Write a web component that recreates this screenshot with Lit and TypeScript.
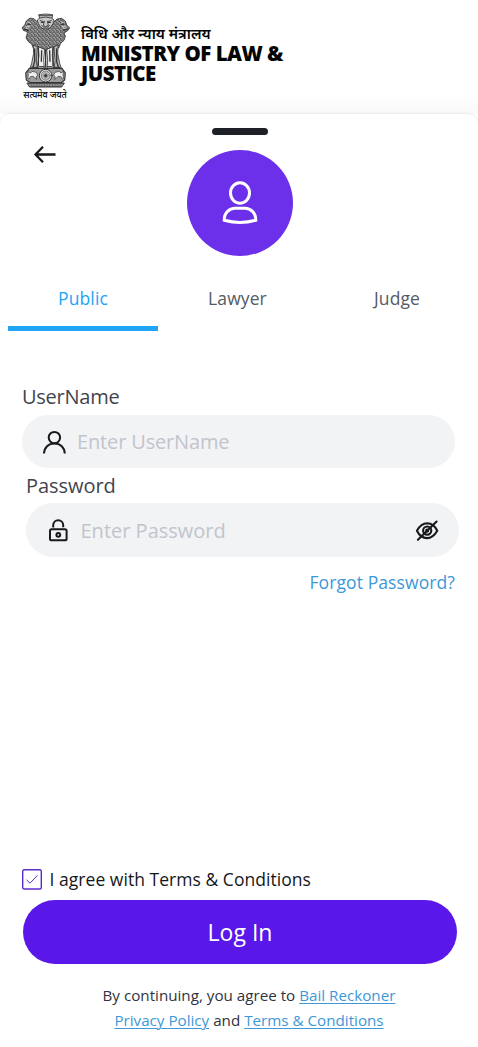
import { LitElement, html, css, svg } from "lit";
import { customElement, state } from "lit/decorators.js";

@customElement("state-emblem")
class StateEmblem extends LitElement {
  static styles = css`
    :host { display: block; width: 50px; height: 76px; }
    svg { display: block; }
  `;
  render() {
    const spokes = Array.from({ length: 8 }, (_, i) => svg`<path d="M92 199V225" transform=${`rotate(${i * 22.5} 92 212)`} stroke-width="1"/>`);
    return html`<svg width="50" height="76" viewBox="18 24 150 228" fill="none" stroke="#333" stroke-width="2.500" stroke-linejoin="round" stroke-linecap="round">
      <defs>
        <pattern id="fur" width="11" height="12" patternUnits="userSpaceOnUse">
          <rect width="11" height="12" fill="#8c8c8c" stroke="none"/>
          <path d="M1 1q5 1 3 6M7 4q4 3 1 7M2 9q2 1 2 3" stroke="#2c2c2c" stroke-width="2.200"/>
          <path d="M5 1q3 1 3 3M1 6l1 3" stroke="#d8d8d8" stroke-width="1.800"/>
        </pattern>
      </defs>
      <path d="M44 40L34 48 29 61 21 68 26 77 36 79 37 86 33 98 40 110 50 117 55 129 75 130 92 135 110 130 131 129 137 115 147 106 151 94 147 84 157 78 164 69 155 60 151 48 140 40 126 42 116 52 68 52 58 42Z" fill="url(#fur)"/>
      <path d="M72 29Q92 25 113 29L111 40 117 45 114 56 106 68 92 76 78 68 70 56 67 45 73 40Z" fill="#c8c8c8"/>
      <path d="M73 32H111M74 39Q92 33 110 39M76 47l9 2M100 49l9-2M88 49l-3 12 7 4 8-4-3-12M80 62q12 10 24 0M84 69q8 5 16 0"/>
      <path d="M79 52h6M100 52h6" stroke-width="4"/>
      <path d="M37 54l7-2 4 6-6 6-10 2M28 70l11 1 4-6M148 54l-7-2-4 6 6 6 10 2M157 70l-11 1-4-6" stroke="#d8d8d8"/>
      <path d="M39 57l7 2M145 57l-7 2M28 72l12 4M157 72l-12 4" stroke-width="4"/>
      <path d="M55 121Q59 145 50 175L45 190H67L64 168 67 126ZM129 121Q125 145 134 175L139 190H117L120 168 117 126Z" fill="#b9b9b9"/>
      <path d="M70 126L72 151 67 190H88L86 165 89 134ZM114 126L112 151 117 190H96L98 165 95 134Z" fill="#ededed"/>
      <path d="M59 132v38l-5 16M70 130v52M80 137l-1 32M125 132v38l5 16M114 130v52M104 137l1 32M92 136v50" stroke-width="4"/>
      <path d="M50 187h20M73 185h14M97 185h14M114 187h20" stroke-width="3"/>
      <path d="M43 190H141L151 204 149 225 138 233H46L34 225 32 204Z" fill="#9c9c9c" stroke-width="3.500"/>
      <path d="M39 200l8 4 4-5 13 3 4 8-5 6 3 7-6-3-5-6-9 1-3 7-5-2 2-9zM145 200l-8 4-4-5-13 3-4 8 5 6-3 7 6-3 5-6 9 1 3 7 5-2-2-9z" fill="#f0f0f0" stroke-width="2"/>
      <circle cx="92" cy="212" r="19" fill="#f2f2f2" stroke-width="3"/>
      <circle cx="92" cy="212" r="14" stroke-width="1.500" fill="#d9d9d9"/>
      ${spokes}
      <circle cx="92" cy="212" r="3" fill="#333"/>
      <path d="M37 234H148L140 246H45Z" fill="#6b6b6b" stroke-width="3"/>
      <path d="M43 240H142" stroke-dasharray="3 5" stroke="#c4c4c4"/>
    </svg>`;
  }
}

const userIcon = html`<svg width="24" height="24" viewBox="0 0 24 24" fill="none" stroke="#17191c" stroke-width="2"><circle cx="12.400" cy="7.600" r="5.700"/><path d="M2 23.500C2.200 17.300 6.500 13.500 12.400 13.500s10.200 3.800 10.400 10"/></svg>`;
const lockIcon = html`<svg width="20" height="24" viewBox="0 0 20 24" fill="none" stroke="#17191c" stroke-width="2"><rect x="2" y="11.300" width="16.600" height="11" rx="1.600"/><path d="M5.200 9.500V7.200a5 5 0 0 1 10 0V9.300"/><circle cx="10.300" cy="16.800" r="1.900"/></svg>`;
const eyeIcon = html`<svg width="24" height="24" viewBox="0 0 24 24" fill="none" stroke="#17191c" stroke-width="2.100" stroke-linecap="round" stroke-linejoin="round"><path d="M1.900 12.700Q6 5.400 12.300 5.300 18.500 5.400 22.300 12.700 18 20 12 20.100 5.500 20 1.900 12.700Z"/><circle cx="12.200" cy="12.600" r="4.100"/><circle cx="12.200" cy="12.600" r="1"/><path d="M2.900 21.800L21.600 3.500"/></svg>`;

@customElement("app-root")
class AppRoot extends LitElement {
  @state() tab = 0;
  @state() agreed = true;

  static styles = css`
    :host {
      display: flex; flex-direction: column; box-sizing: border-box; width: 478px; height: 1047px;
      overflow: hidden; background: #fff; color: #42444e;
      font-family: "Open Sans", "Noto Sans", sans-serif; white-space: nowrap;
    }
    svg { display: block; flex: none; }
    .header {
      box-sizing: border-box; flex: none; display: flex; height: 114px; padding: 12.500px 0 0 21px;
      background: linear-gradient(#fff 80%, #f9f9f9);
      color: #050505; font-family: "Noto Sans", sans-serif;
    }
    .emblem { width: 50px; display: flex; flex-direction: column; align-items: center; }
    .motto { font-size: 9px; line-height: 13px; font-weight: 500; letter-spacing: -.15px; margin: -1px 2px 0 0; }
    .ministry { padding: 11px 0 0 10px; }
    .hindi { font-size: 14.800px; line-height: 19px; font-weight: 600; }
    .english { font-family: "Open Sans", sans-serif; font-size: 20.500px; line-height: 20px; font-weight: 800; letter-spacing: -.5px; }
    .sheet {
      box-sizing: border-box; flex: 1; display: flex; flex-direction: column;
      background: #fff; border-radius: 10px 10px 0 0; box-shadow: 0 0 3px rgba(0, 0, 0, .12);
    }
    .top { flex: none; display: grid; grid-template-columns: 187px 106px 1fr; height: 152px; }
    .back { padding: 31px 0 0 33px; }
    .middle { display: flex; flex-direction: column; align-items: center; padding-top: 14px; }
    .handle { width: 56px; height: 6.700px; border-radius: 3.500px; background: #1d2026; }
    .avatar { display: grid; place-items: center; width: 106px; height: 106px; margin-top: 15px; border-radius: 50%; background: #6c30eb; }
    .tabs { flex: none; display: grid; grid-template-columns: 150px 159px 160px; padding-left: 8px; height: 65px; }
    .tab { box-sizing: border-box; text-align: center; font-size: 17.500px; letter-spacing: .1px; line-height: 24px; padding-top: 20px; color: #565a66; border-bottom: 5px solid transparent; }
    .tab.on { color: #20a5f6; border-color: #20a5f6; }
    .form { flex: none; padding: 54px 0 0 22px; }
    .label { font-size: 20px; line-height: 24px; letter-spacing: -.25px; }
    .field { display: flex; align-items: center; box-sizing: border-box; width: 432.500px; height: 53px; border-radius: 27px; background: #f2f3f5; margin-top: 6px; padding: 0 20px 0 20px; color: #c2c4cc; font-size: 20px; letter-spacing: -.15px; }
    .hint { flex: 1; padding-left: 11px; }
    .second { padding: 6px 0 0 4px; }
    .second .label { letter-spacing: -.05px; }
    .second .field { padding-left: 22px; height: 54px; margin-top: 5px; letter-spacing: 0; }
    .second .hint { padding-left: 12.500px; }
    .forgot { font-size: 17.500px; letter-spacing: .1px; line-height: 24px; text-align: right; width: 433px; margin-top: 13px; color: #3d98d8; }
    .bottom { margin-top: auto; padding: 0 21px 14px 22px; }
    .agree { display: flex; align-items: center; gap: 7.500px; color: #15171a; font-size: 17.500px; letter-spacing: .04px; line-height: 24px; }
    .login { display: grid; place-items: center; margin: 9px 0 0 1px; height: 64px; border-radius: 32px; background: #5918e9; color: #fff; font-size: 23px; line-height: 30px; }
    .legal { margin-top: 19px; padding-left: 19px; text-align: center; font-size: 15.200px; line-height: 25px; color: #30323d; }
    .link { color: #3d98d8; text-decoration: underline; text-decoration-thickness: 1px; text-underline-offset: 2px; }
  `;

  render() {
    return html`
      <div class="header">
        <div class="emblem"><state-emblem></state-emblem><div class="motto">सत्यमेव जयते</div></div>
        <div class="ministry">
          <div class="hindi">विधि और न्याय मंत्रालय</div>
          <div class="english">MINISTRY OF LAW &amp;<br />JUSTICE</div>
        </div>
      </div>
      <div class="sheet">
        <div class="top">
          <div class="back"><svg width="24" height="20" viewBox="0 0 24 20" fill="none" stroke="#17191c" stroke-width="2.300"><path d="M22.500 9.500H3M10 1.800L2.500 9.500 10 17.200"/></svg></div>
          <div class="middle">
            <div class="handle"></div>
            <div class="avatar"><svg width="38" height="46" viewBox="0 0 38 46" fill="none" stroke="#fff" stroke-width="3"><ellipse cx="19" cy="13" rx="9.500" ry="10.200"/><path d="M3.200 40.200C3.200 32.500 8.500 28.300 14 28.300H24C29.500 28.300 34.800 32.500 34.800 40.200Q27 42.400 19 42.400T3.200 40.200Z"/></svg></div>
          </div>
        </div>
        <div class="tabs">
          ${["Public", "Lawyer", "Judge"].map((t, i) => html`<div class="tab ${i === this.tab ? "on" : ""}" @click=${() => (this.tab = i)}><span>${t}</span></div>`)}
        </div>
        <div class="form">
          <div class="label"><span>UserName</span></div>
          <div class="field">${userIcon}<span class="hint">Enter UserName</span></div>
          <div class="second">
            <div class="label"><span>Password</span></div>
            <div class="field">${lockIcon}<span class="hint">Enter Password</span>${eyeIcon}</div>
          </div>
          <div class="forgot">Forgot Password?</div>
        </div>
        <div class="bottom">
          <div class="agree" @click=${() => (this.agreed = !this.agreed)}>
            <svg width="20" height="21" viewBox="0 0 20 21" fill="none" stroke="#5b2bd0"><rect x=".7" y=".7" width="18.600" height="19.300" rx="1.500" stroke-width="1.400"/>${this.agreed ? svg`<path d="M4.500 10.800L8 14.200 15.500 6.300" stroke-width="1"/>` : ""}</svg>
            <span>I agree with Terms &amp; Conditions</span>
          </div>
          <div class="login">Log In</div>
          <div class="legal">By continuing, you agree to <span class="link">Bail Reckoner</span><br /><span class="link">Privacy Policy</span> and <span class="link">Terms &amp; Conditions</span></div>
        </div>
      </div>
    `;
  }
}
